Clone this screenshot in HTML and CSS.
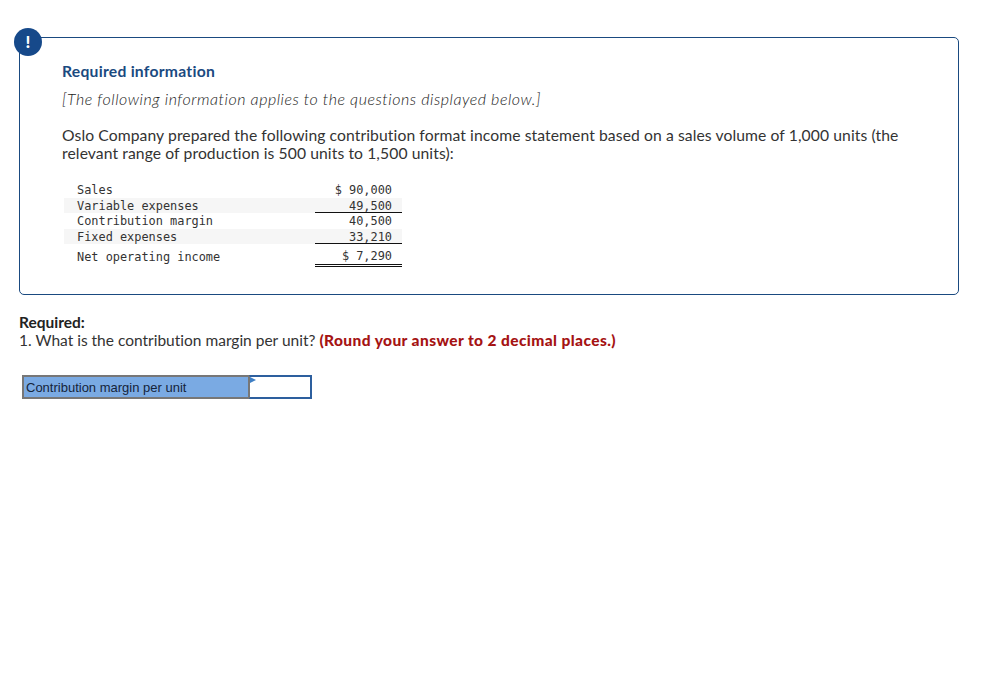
FILE: index.html
```html
<!DOCTYPE html>
<html lang="en">
<head>
<meta charset="utf-8">
<title>Required information</title>
<link rel="stylesheet" href="styles.css">
</head>
<body>
<section class="card">
  <span class="badge">!</span>
  <h2 class="card-title">Required information</h2>
  <p class="note">[The following information applies to the questions displayed below.]</p>
  <p class="intro">Oslo Company prepared the following contribution format income statement based on a sales volume of 1,000 units (the relevant range of production is 500 units to 1,500 units):</p>
  <div class="statement">
    <div class="row"><span class="label">Sales</span><span class="value">$ 90,000</span></div>
    <div class="row shade"><span class="label">Variable expenses</span><span class="value single">49,500</span></div>
    <div class="row"><span class="label">Contribution margin</span><span class="value">40,500</span></div>
    <div class="row shade"><span class="label">Fixed expenses</span><span class="value single">33,210</span></div>
    <div class="row last"><span class="label">Net operating income</span><span class="value double">$ 7,290</span></div>
  </div>
</section>
<section class="question">
  <p class="required">Required:</p>
  <p class="prompt">1. What is the contribution margin per unit? <strong class="hint">(Round your answer to 2 decimal places.)</strong></p>
</section>
<div class="answer">
  <div class="answer-label">Contribution margin per unit</div>
  <div class="answer-input"><span class="flag"></span></div>
</div>
</body>
</html>
```
FILE: styles.css
```css
* { box-sizing: border-box; }
html, body { margin: 0; padding: 0; background: #fff; }
body {
  padding: 37px 37px 0 19px;
  font-family: Lato, "Open Sans", sans-serif;
  font-variant-ligatures: none;
  color: #2b2b2b;
  font-size: 15.5px;
  width: 996px;
  height: 676px;
  overflow: hidden;
}
p, h2 { margin: 0; }
.card {
  position: relative;
  width: 940px;
  height: 258px;
  border: 1px solid #1a4a80;
  border-radius: 5px;
  padding: 23px 42px 0 42px;
}
.badge {
  position: absolute;
  left: -6px;
  top: -10px;
  width: 28px;
  height: 28px;
  border-radius: 50%;
  background: #16498a;
  color: #fff;
  font-weight: 900;
  font-size: 17px;
  line-height: 28px;
  text-align: center;
}
.card-title {
  font-size: 15.7px;
  line-height: 20px;
  font-weight: 700;
  color: #1a4a80;
  letter-spacing: 0.25px;
}
.note { margin-top: 8px; line-height: 20px; font-style: italic; font-size: 16px; letter-spacing: 0.54px; font-weight: 300; color: #1c1c1c; }
.intro { margin-top: 17px; line-height: 18px; letter-spacing: 0.09px; font-size: 15.7px; color: #333; }
.statement {
  margin-top: 20px;
  margin-left: 2px;
  width: 338px;
  font-family: "DejaVu Sans Mono", monospace;
  font-size: 11.9px;
  color: #333;
}
.row { display: flex; justify-content: space-between; height: 15.6px; line-height: 17.6px; padding-left: 13px; }
.shade { background: #f6f6f6; }
.value { width: 87px; padding-right: 10px; text-align: right; }
.single { height: 15.6px; border-bottom: 1px solid #111; }
.last { height: 22px; line-height: 26px; }
.double { height: 23px; border-bottom: 3px double #111; line-height: 24px; }
.question { margin-top: 18px; line-height: 18px; }
.required { font-weight: 700; color: #222; }
.prompt { color: #333; }
.hint { color: #a51313; font-weight: 900; letter-spacing: 0.4px; }
.answer {
  display: flex;
  margin-top: 26px;
  margin-left: 3px;
  width: 290px;
  height: 24px;
  font-family: "Liberation Sans", Arial, sans-serif;
  font-size: 13px;
}
.answer-label {
  width: 227px;
  background: #7aaae3;
  color: #15243a;
  border: 2px solid #777;
  border-right-width: 1px;
  padding-left: 2px;
  line-height: 21px;
}
.answer-input {
  position: relative;
  flex: 1;
  background: #fff;
  border: 2px solid #2d5f9e;
  border-left: 1px solid #777;
}
.flag {
  position: absolute;
  left: 0;
  top: 0;
  border-left: 6px solid #3f7fc4;
  border-top: 3px solid transparent;
  border-bottom: 3px solid transparent;
}
```
